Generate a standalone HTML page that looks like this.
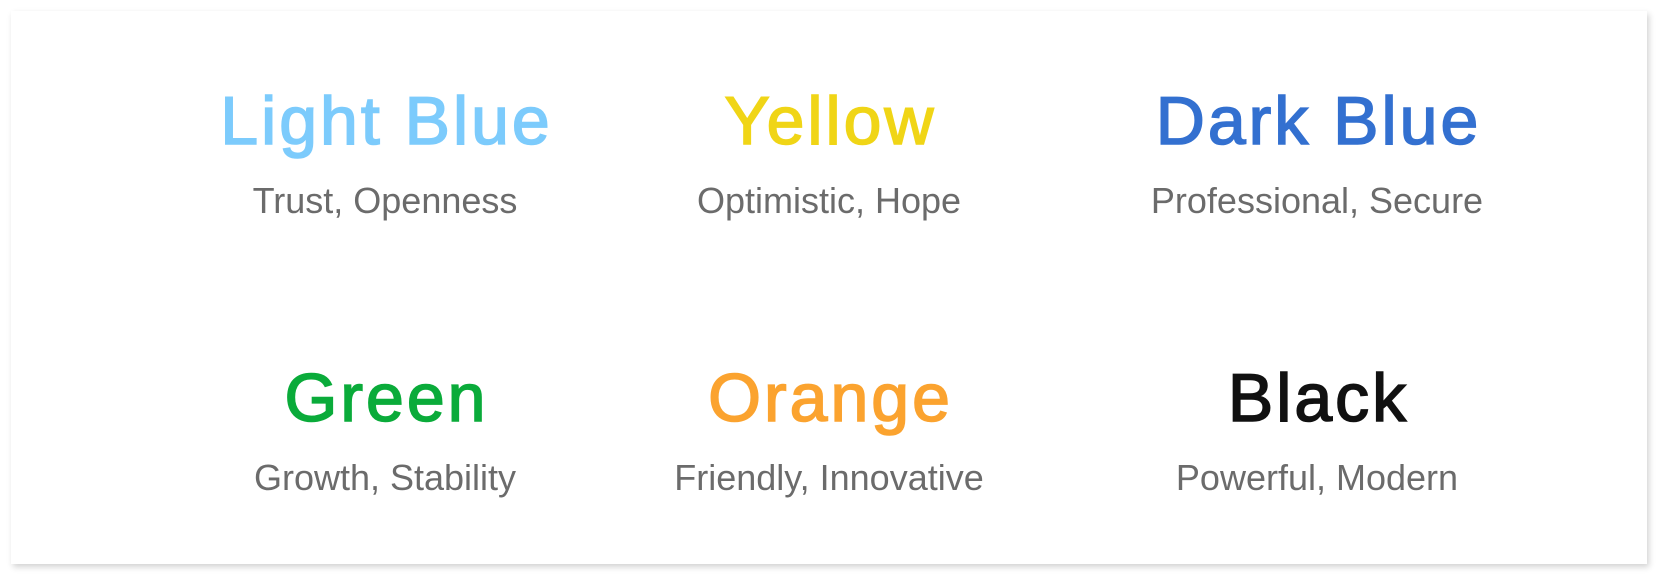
<!DOCTYPE html>
<html><head><style>
html,body{margin:0;padding:0;background:#fff;}
body{width:1669px;height:584px;position:relative;overflow:hidden;font-family:"Liberation Sans",sans-serif;}
.card{position:absolute;left:11px;top:11px;width:1636px;height:553px;background:#fff;box-shadow:2px 3px 6px rgba(0,0,0,0.18);}
.t{position:absolute;width:600px;margin-left:-300px;text-align:center;font-size:68px;line-height:1;-webkit-text-stroke:1.6px currentColor;white-space:nowrap;letter-spacing:3px;text-indent:3px;}
.s{position:absolute;width:600px;margin-left:-300px;text-align:center;font-size:36px;line-height:1;color:#6b6b6b;white-space:nowrap;}
</style></head><body>
<div class="card"></div>
<div class="t" style="left:385px;top:87px;color:#7ccbfc">Light Blue</div>
<div class="t" style="left:829px;top:87px;color:#f0d516">Yellow</div>
<div class="t" style="left:1317px;top:87px;color:#3370d0">Dark Blue</div>
<div class="s" style="left:385px;top:183px">Trust, Openness</div>
<div class="s" style="left:829px;top:183px">Optimistic, Hope</div>
<div class="s" style="left:1317px;top:183px">Professional, Secure</div>
<div class="t" style="left:385px;top:364px;color:#0aab3a">Green</div>
<div class="t" style="left:829px;top:364px;color:#fba32f">Orange</div>
<div class="t" style="left:1317px;top:364px;color:#111">Black</div>
<div class="s" style="left:385px;top:460px">Growth, Stability</div>
<div class="s" style="left:829px;top:460px">Friendly, Innovative</div>
<div class="s" style="left:1317px;top:460px">Powerful, Modern</div>
</body></html>
